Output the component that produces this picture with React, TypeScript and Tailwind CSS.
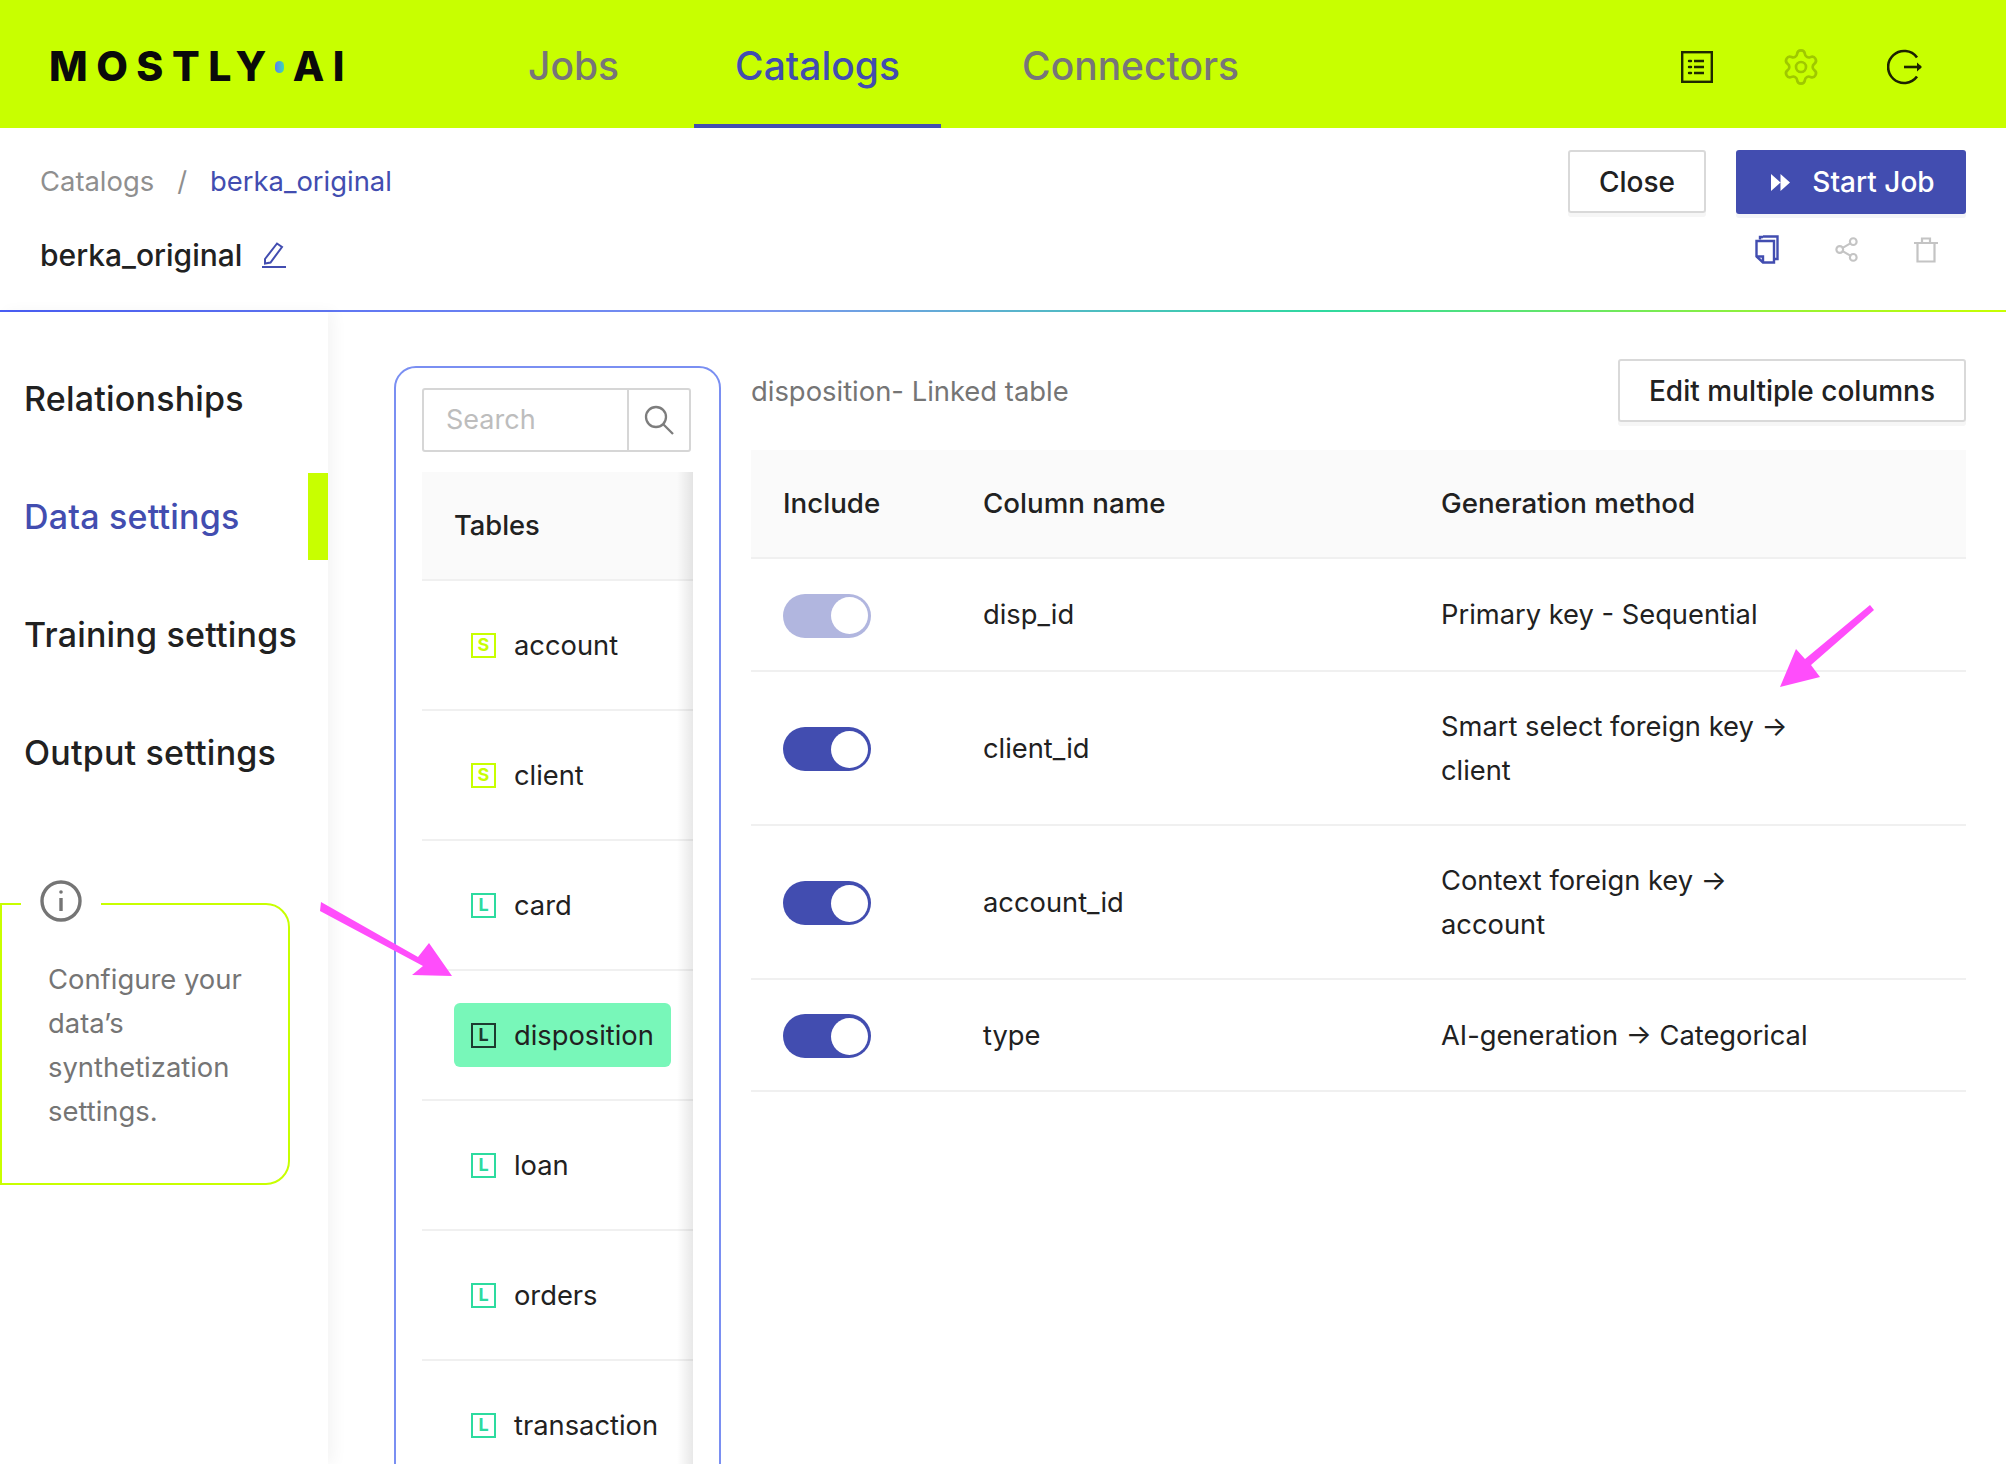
import React from 'react';
import { Settings, Share2 } from 'lucide-react';

const tables = [
  { name: 'account', kind: 'S' },
  { name: 'client', kind: 'S' },
  { name: 'card', kind: 'L' },
  { name: 'disposition', kind: 'L', active: true },
  { name: 'loan', kind: 'L' },
  { name: 'orders', kind: 'L' },
  { name: 'transaction', kind: 'L' },
];

const columns = [
  { name: 'disp_id', method: ['Primary key - Sequential'], locked: true },
  { name: 'client_id', method: ['Smart select foreign key →', 'client'] },
  { name: 'account_id', method: ['Context foreign key →', 'account'] },
  { name: 'type', method: ['AI-generation → Categorical'] },
];

const Toggle = ({ locked }: { locked?: boolean }) => (
  <div className={`mt-[1px] flex h-[44px] w-[88px] items-center justify-end rounded-full pr-[3px] ${locked ? 'bg-[#b1b6df]' : 'bg-[#424db0]'}`}>
    <div className="h-[37px] w-[37px] rounded-full bg-white" />
  </div>
);

const TableTag = ({ kind, active }: { kind: string; active?: boolean }) => {
  const color = active
    ? 'border-[#1d3b30] text-[#1d3b30]'
    : kind === 'S'
      ? 'border-[#c8ff00] text-[#c8ff00]'
      : 'border-[#2ddb9f] text-[#2ddb9f]';
  return (
    <span className={`flex h-[25px] w-[25px] shrink-0 items-center justify-center border-2 text-[18px] font-bold leading-none ${color}`}>
      {kind}
    </span>
  );
};

const Logo = () => (
  <div className="flex w-[439px] items-center text-[41px] font-extrabold leading-none tracking-[8.5px] text-[#0a0a0a]">
    <span>MOSTLY</span>
    <span className="mr-[9px] h-[12px] w-[9px] rounded-full bg-[linear-gradient(90deg,#5b7cf5,#3fd9b0)]" />
    <span>AI</span>
  </div>
);

export default function App() {
  return (
    <div className="relative h-[1464px] w-full overflow-hidden bg-white font-['Inter',sans-serif] text-[#212121]">
      {/* Top nav */}
      <header className="flex h-[128px] items-stretch bg-[#c8ff00] pl-[49px] pr-[83px] pt-[5px]">
        <Logo />
        <nav className="flex gap-[41px] text-[39px] font-medium">
          <a className="flex items-center pl-[40px] pr-[34px] text-[#77757a]">Jobs</a>
          <a className="flex items-center border-b-4 border-[#424db0] px-[41px] pt-[4px] text-[#424db0]">Catalogs</a>
          <a className="flex items-center px-[40px] text-[#77757a]">Connectors</a>
        </nav>
        <div className="ml-auto flex items-center gap-[66px]">
          <svg className="mr-[2px]" width="32" height="32" viewBox="0 0 32 32" fill="none" stroke="#1f2a00" strokeWidth="2.4">
            <rect x="1.2" y="1.2" width="29.6" height="29.6" />
            <path d="M13 10h10M13 16h10M13 22h10" />
            <path d="M8 10h2M8 16h2M8 22h2" strokeLinecap="round" />
          </svg>
          <Settings size={40} strokeWidth={1.6} color="#9fc800" />
          <svg width="36" height="36" viewBox="0 0 36 36" fill="none" stroke="#1c2200" strokeWidth="2.6">
            <path d="M30 8.5A16 16 0 1 0 30 27.500" />
            <path d="M17 18h17" />
            <path d="M30 13.500l5 4.500-5 4.500z" fill="#1c2200" stroke="none" />
          </svg>
        </div>
      </header>

      {/* Breadcrumb + actions */}
      <section className="h-[182px] pl-[40px] pr-[40px] pt-[22px]">
        <div className="flex h-[64px] items-center justify-between">
          <div className="flex items-center text-[27.4px]">
            <span className="text-[#8f8f8f]">Catalogs</span>
            <span className="mx-[23px] text-[#8f8f8f]">/</span>
            <span className="text-[#424db0]">berka_original</span>
          </div>
          <div className="flex gap-[30px]">
            <button className="h-[63px] w-[138px] rounded-[3px] border-2 border-[#d9d9d9] text-[28px] font-medium shadow-[0_4px_0_#f6f6f6]">
              Close
            </button>
            <button className="flex h-[64px] w-[230px] items-center justify-center gap-[22px] rounded-[3px] bg-[#424db0] pl-[4px] text-[28px] font-medium text-white shadow-[0_4px_0_#f3f4f8]">
              <svg width="19" height="17" viewBox="0 0 19 17" fill="white">
                <path d="M0 0l9.500 8.500L0 17zM9.500 0L19 8.500 9.500 17z" />
              </svg>
              Start Job
            </button>
          </div>
        </div>
        <div className="flex items-start justify-between pt-[16px]">
          <div className="flex h-[50px] items-center gap-[20px] text-[30px] font-medium">
            <span>berka_original</span>
            <svg width="24" height="26" viewBox="0 0 24 26" fill="none" stroke="#424db0" strokeWidth="2">
              <path d="M3 17L15 1.500l5 3.500L8.500 20.500 3 21.500z" />
              <path d="M0 25h24" />
            </svg>
          </div>
          <div className="flex items-center gap-[54px] pr-[28px] pt-[5px]">
            <svg width="24" height="29" viewBox="0 0 24 29" fill="none" stroke="#424db0" strokeWidth="2.400">
              <path d="M5 4.500V2h3M8 1.500h14.500V24H20" />
              <path d="M1.500 6h17.500v21.500H8L1.500 21.500z" />
              <path d="M1.500 21.500H8v6" />
            </svg>
            <Share2 size={27} strokeWidth={1.9} color="#c4c4c4" />
            <svg width="24" height="26" viewBox="0 0 24 26" fill="none" stroke="#c4c4c4" strokeWidth="2.200">
              <path d="M0 6h24M8 6V1.500h8V6" />
              <path d="M3.500 6v18.500h17V6" />
            </svg>
          </div>
        </div>
      </section>
      <div className="h-[2px] bg-[linear-gradient(90deg,#4a5ef5_0%,#7b95f0_38%,#2fd9a0_66%,#c8ff00_100%)]" />

      <div className="flex">
        {/* Side nav */}
        <aside className="h-[1152px] w-[328px] shrink-0 pt-[27px] shadow-[6px_0_14px_rgba(0,0,0,0.045)]">
          {['Relationships', 'Data settings', 'Training settings', 'Output settings'].map((label) => (
            <div key={label} className="flex h-[118px] items-center justify-between pl-[24px]">
              <span className={`text-[34px] font-medium tracking-[0.2px] ${label === 'Data settings' ? 'text-[#424db0]' : ''}`}>{label}</span>
              {label === 'Data settings' && <span className="h-[87px] w-[20px] bg-[#c8ff00]" />}
            </div>
          ))}
          <div className="relative mt-[92px] h-[282px] w-[290px] rounded-r-[24px] border-2 border-[#c8ff00] pl-[46px] pt-[52px] text-[27.4px] leading-[44px] text-[#757575]">
            <div className="absolute left-[19px] top-[-27px] flex h-[46px] w-[80px] items-center justify-center bg-white">
              <svg width="42" height="42" viewBox="0 0 42 42" fill="none" stroke="#757575" strokeWidth="3.400">
                <circle cx="21" cy="21" r="19" />
                <path d="M21 18v13" />
                <circle cx="21" cy="12" r="1.800" fill="#757575" stroke="none" />
              </svg>
            </div>
            Configure your
            <br />
            data’s
            <br />
            synthetization
            <br />
            settings.
          </div>
        </aside>

        {/* Table list */}
        <div className="ml-[66px] mt-[54px] h-[1200px] w-[327px] shrink-0 rounded-t-[22px] border-2 border-[#7a8ff2] pl-[26px] pr-[26px] pt-[20px]">
          <div className="flex h-[64px] w-[269px] rounded-[3px] border-2 border-[#d6d6d6]">
            <div className="flex flex-1 items-center pl-[22px] text-[27px] text-[#bdbdbd]">Search</div>
            <div className="flex w-[62px] items-center justify-center border-l-2 border-[#d6d6d6]">
              <svg width="30" height="30" viewBox="0 0 30 30" fill="none" stroke="#7d7d7d" strokeWidth="2.300">
                <circle cx="12" cy="12" r="10" />
                <path d="M19 19l10 10" />
              </svg>
            </div>
          </div>
          <div className="relative mt-[20px]">
            <div className="flex h-[109px] items-center border-b-2 border-[#f0f0f0] bg-[#fafafa] pl-[32px] pt-[2px] text-[27.3px] font-medium">Tables</div>
            {tables.map((t) => (
              <div key={t.name} className="flex h-[130px] items-center border-b-2 border-[#f0f0f0] text-[27.3px]">
                {t.active ? (
                  <div className="ml-[32px] flex h-[64px] w-[217px] items-center gap-[18px] rounded-[6px] bg-[#78f7b9] pl-[17px]">
                    <TableTag kind={t.kind} active />
                    <span className="pt-[2px]">{t.name}</span>
                  </div>
                ) : (
                  <div className="ml-[49px] flex items-center gap-[18px]">
                    <TableTag kind={t.kind} />
                    <span className="pt-[2px]">{t.name}</span>
                  </div>
                )}
              </div>
            ))}
            <div className="absolute bottom-0 right-0 top-0 w-[16px] bg-[linear-gradient(90deg,rgba(0,0,0,0),rgba(0,0,0,0.09))]" />
          </div>
        </div>

        {/* Columns */}
        <main className="ml-[30px] w-[1215px] shrink-0 pt-[47px]">
          <div className="flex items-center justify-between">
            <span className="pt-[2px] text-[27.4px] text-[#757575]">disposition- Linked table</span>
            <button className="h-[63px] w-[348px] rounded-[3px] border-2 border-[#d9d9d9] text-[28px] font-medium shadow-[0_4px_0_#f6f6f6]">
              Edit multiple columns
            </button>
          </div>
          <div className="mt-[28px] grid h-[109px] grid-cols-[200px_458px_1fr] items-center border-b-2 border-[#f0f0f0] bg-[#fafafa] pl-[32px] text-[27.7px] font-medium">
            <span>Include</span>
            <span>Column name</span>
            <span>Generation method</span>
          </div>
          {columns.map((c) => (
            <div key={c.name} className="grid min-h-[112.5px] grid-cols-[200px_458px_1fr] items-center border-b-2 border-[#f0f0f0] pb-[31px] pl-[32px] pt-[33px] text-[27.3px] leading-[44px]">
              <Toggle locked={c.locked} />
              <span>{c.name}</span>
              <span>
                {c.method.map((line) => (
                  <span key={line} className="block">{line}</span>
                ))}
              </span>
            </div>
          ))}
        </main>
      </div>

      {/* Annotation arrows */}
      <svg className="pointer-events-none absolute left-0 top-0" width="2006" height="1464" fill="#ff4dfb" stroke="none">
        <path d="M321 902L418 957L429 943L452 976L412 975L423 966L320 911z" />
        <path d="M1870 605L1874 610L1811 665L1820 677L1780 687L1796 649L1805 659z" />
      </svg>
    </div>
  );
}
